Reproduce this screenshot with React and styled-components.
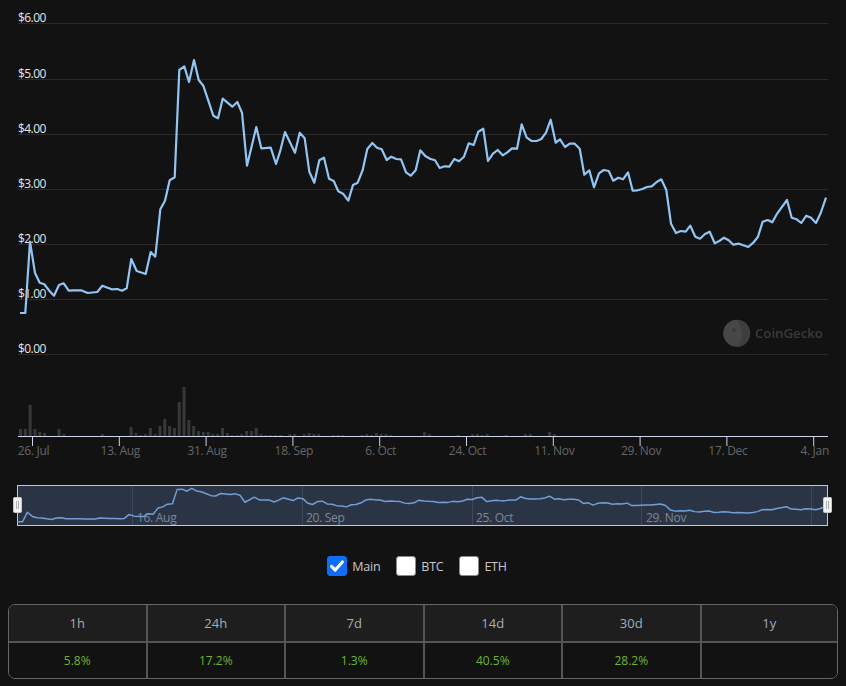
import React from 'react';
import styled, { createGlobalStyle } from 'styled-components';

const GlobalStyle = createGlobalStyle`
	html, body {
		margin: 0;
		padding: 0;
		background: #121212;
	}
	body {
		font-family: "Open Sans", "Noto Sans", sans-serif;
	}
`;

const Wrapper = styled.div`
	width: 846px;
	height: 686px;
	background: #121212;
	display: flex;
	flex-direction: column;
	overflow: hidden;
`;

const ChartSvg = styled.svg`
	display: block;
	width: 846px;
	height: 545px;
	flex: none;
`;

const YLabel = styled.text`
	font-family: "Open Sans", sans-serif;
	font-size: 12px;
	letter-spacing: -0.55px;
	fill: #e6e6e6;
`;

const XLabel = styled.text`
	font-family: "Open Sans", sans-serif;
	font-size: 12px;
	letter-spacing: -0.3px;
	fill: #666;
	text-anchor: middle;
`;

const NavLabel = styled.text`
	font-family: "Open Sans", sans-serif;
	font-size: 12px;
	letter-spacing: -0.3px;
	fill: #7f8894;
`;

const Watermark = styled.text`
	font-family: "Open Sans", sans-serif;
	font-size: 13.2px;
	font-weight: 600;
	fill: #3a3a3a;
`;

const Selector = styled.div`
	display: flex;
	justify-content: center;
	align-items: center;
	height: 42px;
	padding-right: 12px;
`;

const Option = styled.label`
	display: flex;
	align-items: center;
	gap: 5px;
	margin-right: ${p => p.$last ? 0 : '16px'};
	font-size: 12.5px;
	letter-spacing: -0.25px;
	color: #c8c8c8;
`;

const Box = styled.span`
	width: 20px;
	height: 20px;
	box-sizing: border-box;
	border-radius: 3px;
	border: 1px solid ${p => p.$checked ? '#0d6efd' : '#8a8a8a'};
	background: ${p => p.$checked ? '#0d6efd' : '#fff'};
	display: block;
`;

const Changes = styled.div`
	margin: 17px 8px 0;
	display: grid;
	grid-template-columns: repeat(5, 138.5px) 1fr;
	grid-template-rows: 38px 35px;
	border: 1px solid #666;
	border-radius: 7px;
	overflow: hidden;
	height: 75px;
	box-sizing: border-box;
`;

const Cell = styled.div`
	display: flex;
	align-items: center;
	justify-content: center;
	box-sizing: border-box;
	border-right: ${p => p.$last ? 'none' : '2px solid #555'};
	border-bottom: ${p => p.$head ? '2px solid #555' : 'none'};
	background: ${p => p.$head ? '#1e1e1e' : '#121212'};
	color: ${p => p.$head ? '#a3adb8' : '#6cb52d'};
	font-size: ${p => p.$head ? '13px' : '12px'};
`;

const GRID = [
	['$6.00', 23.5], ['$5.00', 79.5], ['$4.00', 134.5], ['$3.00', 189.5],
	['$2.00', 244.5], ['$1.00', 299.5], ['$0.00', 354.5],
];

const TICKS = ['26. Jul', '13. Aug', '31. Aug', '18. Sep', '6. Oct', '24. Oct', '11. Nov', '29. Nov', '17. Dec', '4. Jan'];

const PRICE = [
	[20, 313], [25.3, 313], [30, 241.7], [35, 273], [39.7, 282.7], [44.3, 284.3], [49.3, 290.7], [54, 295.7], [59, 285], [63.7, 283.3], [68.7, 290.7],
	[73.3, 290.3], [81, 290.3], [87.7, 293], [97.3, 292], [102.3, 285.7], [111.7, 289.3], [117.3, 289], [122, 290.7], [126.7, 288.3], [131.3, 259], [136.7, 271],
	[145.7, 274], [150.7, 252], [155.3, 256.7], [158.3, 229], [160.3, 209.3], [165, 200.7], [169.7, 180.3], [174.7, 177.3], [179.3, 70], [184.3, 66.3], [189, 82],
	[194, 60], [198.7, 80], [203.3, 85.7], [213.3, 115.7], [218, 118.3], [222.7, 98.7], [232.3, 106.7], [237.3, 102], [242, 112.7], [247, 165.7], [256.3, 127],
	[261.3, 148.3], [270.7, 147.7], [276, 164], [280, 151.7], [285, 132], [295, 152.7], [299.7, 132.7], [304.7, 138.3], [309.3, 171.7], [314.3, 182.7],
	[319.3, 160.3], [324, 157.7], [329, 178.7], [333.7, 181], [338.3, 191.3], [343, 193.7], [348.3, 200.7], [353, 185], [357.7, 182.7], [362.7, 170], [367.3, 149],
	[372.3, 143], [377, 147.7], [381.7, 149.3], [386.7, 160], [391.3, 156.7], [396.3, 159], [401, 159.3], [406, 172.3], [410.7, 175.7], [415.7, 170.3],
	[420.3, 150.3], [425.3, 156], [430, 158.7], [435, 160.3], [439.7, 168], [444.7, 166.3], [449.3, 166.7], [454.3, 159], [459, 161.3], [464, 156.7], [468.7, 143.3],
	[473.7, 145], [478.3, 131.7], [483.3, 128.7], [488, 161], [493, 153.7], [497.7, 150], [502.7, 155.3], [507.3, 152.3], [512, 148.3], [517, 148.7], [521.7, 124.3],
	[526.7, 137.7], [531.7, 141], [536.7, 141], [541.3, 139], [546, 132.7], [550.7, 119.7], [555.7, 142.7], [560, 139.3], [565, 147], [569.7, 143.7], [574.7, 143.7],
	[579.7, 148.7], [584.3, 174.7], [589.3, 170.3], [594, 187.3], [599, 173.3], [603.7, 170], [608.7, 171], [613.3, 180.7], [618.3, 177.7], [623, 179.3], [628, 172.3],
	[632.7, 190.7], [637.7, 190.3], [642.3, 189], [647, 187], [651.7, 186.3], [656.7, 182], [661.3, 179.3], [666.3, 190], [671, 223.7], [676, 233], [680.7, 231],
	[685.7, 231.7], [690.3, 225.7], [695.3, 236.7], [700, 238.7], [705, 234], [709.7, 231.7], [714.7, 243.3], [719.3, 241], [724, 237.7], [728.7, 240.3], [733.3, 244.7],
	[739, 243.7], [748.3, 247], [753.3, 242.7], [758, 236.7], [762.7, 221.7], [767.7, 220], [772.3, 222.3], [777.3, 213.3], [787, 200], [791.7, 217.7], [796.7, 219.3],
	[801.3, 223], [806.3, 215.7], [811, 217.7], [816, 223], [820.7, 213], [826, 197.7],
];

// the navigator draws the same series, squeezed into its own strip
const toPoints = pts => pts.map(([x, y]) => `${x},${y}`).join(' ');
const NAV_PRICE = PRICE.map(([x, y]) => [18.3 + (x - 20) * 1.003 - 1, 488.3 + (y - 60) * 0.132]);

const VOLUME = [
	7, 7, 31, 7, 4, 3, 0, 0, 7, 2, 0, 0, 0, 0, 0, 0, 0, 2, 0, 0, 0, 0, 0, 9, 3, 1, 2, 8, 2, 10, 17, 10, 8, 34, 49, 16, 10, 5, 4, 4,
	2, 2, 8, 3, 1, 1, 2, 5, 5, 8, 2, 1, 1, 1, 1, 0, 2, 2, 0, 2, 3, 2, 2, 0, 0, 1, 1, 1, 0, 0, 0, 1, 2, 1, 3, 2, 2, 1, 0, 0,
	0, 0, 0, 0, 4, 2, 0, 0, 0, 0, 0, 1, 0, 0, 2, 2, 1, 2, 0, 0, 0, 1, 0, 0, 0, 2, 2, 0, 0, 0, 4, 2,
];

const NAV_LINES = [132.5, 302.5, 472.5, 641.5, 811.5];
const NAV_LABELS = [['16. Aug', 137], ['20. Sep', 306], ['25. Oct', 476], ['29. Nov', 646]];

const RANGES = [
	['1h', '5.8%'], ['24h', '17.2%'], ['7d', '1.3%'], ['14d', '40.5%'], ['30d', '28.2%'], ['1y', ''],
];

const Handle = ({ x }) => (
	<g>
		<rect x={x} y="497.5" width="8" height="15" rx="1" fill="#f2f2f2" stroke="#c8c8c8" />
		<path d={`M${x + 3} 501v8M${x + 5} 501v8`} stroke="#b0b0b0" />
	</g>
);

const App = () => {
	return (
		<Wrapper>
			<GlobalStyle />
			<ChartSvg viewBox="0 0 846 545">
				{GRID.map(([label, y]) => (
					<g key={label}>
						<line x1="18" x2="828" y1={y} y2={y} stroke="#2b2b2b" />
						<YLabel x="18" y={y - 2}>{label}</YLabel>
					</g>
				))}

				{VOLUME.map((h, i) => h > 0 && (
					<rect key={i} x={19 + i * 4.81} y={436 - h} width="3" height={h} fill="#383838" />
				))}

				<circle cx="736.7" cy="333.3" r="13.5" fill="#474747" />
				<path d="M737 320c7 0 13 6 13 13c0 8-6 14-13 14c3-5 6-10 5-15c-1-4-3-8-5-12z" fill="#3e3e3e" />
				<circle cx="734" cy="330" r="2" fill="#3a3a3a" />
				<Watermark x="755" y="338">CoinGecko</Watermark>

				<polyline points={toPoints(PRICE)} fill="none" stroke="#90c6f5" strokeWidth="2.2" strokeLinejoin="round" />

				<line x1="18" x2="828" y1="436.5" y2="436.5" stroke="#ccd6eb" />
				{TICKS.map((label, i) => {
					const x = 32.5 + i * 86.8;
					return (
						<g key={label}>
							<line x1={x} x2={x} y1="436" y2="446" stroke="#ccd6eb" />
							<XLabel x={x + 1} y="455">{label}</XLabel>
						</g>
					);
				})}

				<rect x="17.5" y="485.5" width="810" height="40" fill="#2b3445" stroke="#c8c8c8" />
				{NAV_LINES.map(x => (
					<line key={x} x1={x} x2={x} y1="486" y2="525" stroke="#3f4858" />
				))}
				{NAV_LABELS.map(([label, x]) => (
					<NavLabel key={label} x={x} y="521.5">{label}</NavLabel>
				))}
				<polyline points={toPoints(NAV_PRICE)} fill="none" stroke="#6f9fd6" strokeWidth="1.5" strokeLinejoin="round" />
				<Handle x={13.5} />
				<Handle x={823.5} />
			</ChartSvg>

			<Selector>
				<Option>
					<Box $checked>
						<svg viewBox="0 0 20 20" width="18" height="18">
							<path d="M4 10.5l4 4L16 5.5" fill="none" stroke="#fff" strokeWidth="3.4" strokeLinecap="round" strokeLinejoin="round" />
						</svg>
					</Box>
					Main
				</Option>
				<Option>
					<Box />
					BTC
				</Option>
				<Option $last>
					<Box />
					ETH
				</Option>
			</Selector>

			<Changes>
				{RANGES.map(([range], i) => <Cell key={range} $head $last={i === 5}>{range}</Cell>)}
				{RANGES.map(([range, value], i) => <Cell key={range} $last={i === 5}>{value}</Cell>)}
			</Changes>
		</Wrapper>
	);
};

export default App;
